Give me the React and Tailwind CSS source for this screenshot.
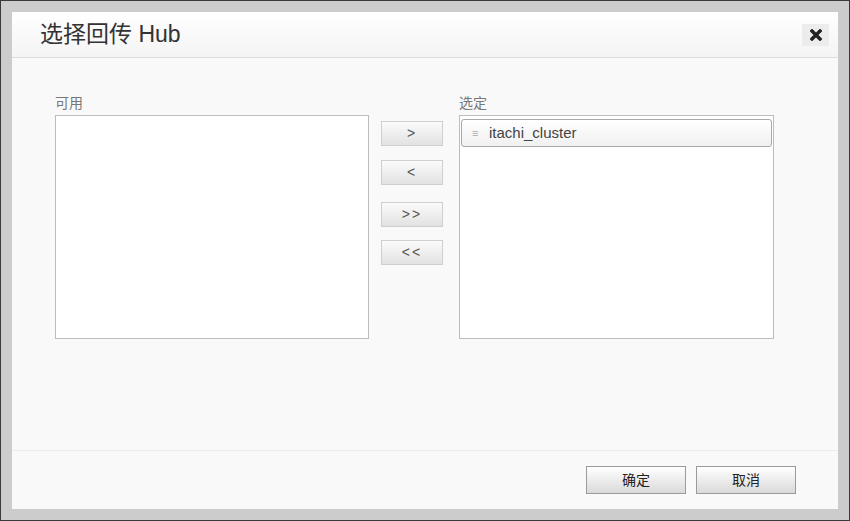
const moveButtons = [
  { label: ">", gap: "" },
  { label: "<", gap: "mt-[14px]" },
  { label: ">>", gap: "mt-[17px]" },
  { label: "<<", gap: "mt-[13px]" },
];

function MoveButton({ label, className }) {
  return (
    <button
      className={`flex h-[25px] w-[62px] items-center justify-center border border-[#cfcfcf] bg-gradient-to-b from-[#fbfbfb] to-[#e2e2e2] text-[14px] tracking-[2px] text-[#555] ${className}`}
    >
      {label}
    </button>
  );
}

function ListBox({ title, width, children }) {
  return (
    <div className="flex flex-col">
      <p className="h-[24px] text-[14px] leading-[24px] text-[#777]">{title}</p>
      <div className={`h-[224px] border border-[#bdbdbd] bg-white px-[1px] pt-[3px] ${width}`}>{children}</div>
    </div>
  );
}

export default function App() {
  return (
    <div
      className="h-[521px] w-[850px] border border-[#3a3a3a] bg-[#cccccc] p-[11px]"
      style={{ fontFamily: '"Liberation Sans", Arial, "Noto Sans CJK SC", sans-serif' }}
    >
      <div className="flex h-[497px] w-[826px] flex-col bg-[#f9f9f9]">
        <div className="flex h-[46px] items-center justify-between border-b border-[#dcdcdc] bg-gradient-to-b from-white to-[#f4f4f4] pl-[28px] pr-[9px]">
          <h1 className="text-[23px] text-[#333]">选择回传 Hub</h1>
          <button className="flex h-[22px] w-[27px] items-center justify-center bg-[#ececec]">
            <svg width="12" height="12" viewBox="0 0 12 12">
              <path d="M2 2 L10 10 M10 2 L2 10" stroke="#222" strokeWidth="3.4" strokeLinecap="square" />
            </svg>
          </button>
        </div>

        <div className="flex flex-1 pl-[43px] pt-[33px]">
          <ListBox title="可用" width="w-[314px]" />
          <div className="ml-[12px] flex w-[62px] flex-col pt-[30px]">
            {moveButtons.map((b) => (
              <MoveButton key={b.label} label={b.label} className={b.gap} />
            ))}
          </div>
          <div className="ml-[16px]">
            <ListBox title="选定" width="w-[315px]">
              <div className="flex h-[28px] items-center rounded-[3px] border border-[#a9a9a9] bg-gradient-to-b from-white to-[#f0f0f0] pl-[10px] text-[#444]">
                <span className="w-[17px] text-[11px] text-[#aaa]">≡</span>
                <span className="text-[15px]">itachi_cluster</span>
              </div>
            </ListBox>
          </div>
        </div>

        <div className="flex h-[59px] items-center justify-end gap-[10px] border-t border-[#ececec] pr-[42px]">
          <button className="h-[28px] w-[100px] border border-[#9a9a9a] bg-gradient-to-b from-white to-[#dadada] text-[14px] text-[#222]">确定</button>
          <button className="h-[28px] w-[100px] border border-[#9a9a9a] bg-gradient-to-b from-white to-[#dadada] text-[14px] text-[#222]">取消</button>
        </div>
      </div>
    </div>
  );
}
